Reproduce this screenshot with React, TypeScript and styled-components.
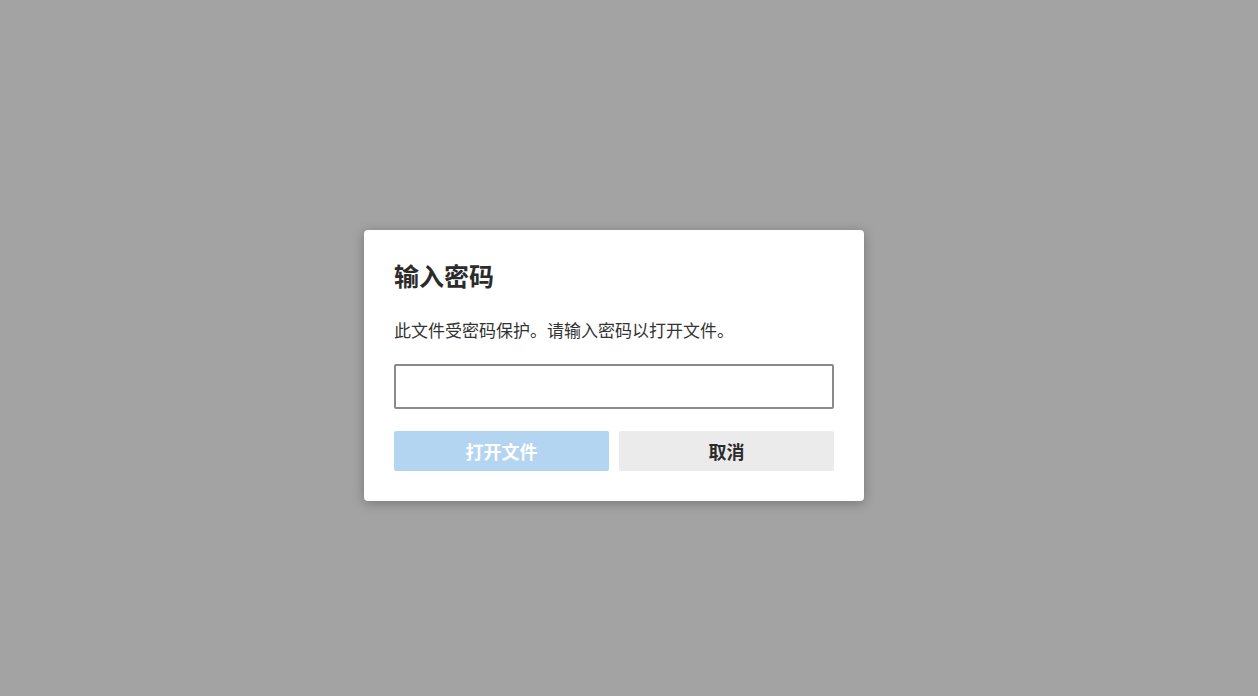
import React from "react";
import styled, { createGlobalStyle } from "styled-components";

const Global = createGlobalStyle`
  html, body { margin: 0; padding: 0; }
  body {
    background: #a3a3a3;
    font-family: "Noto Sans CJK SC", "Noto Sans", sans-serif;
  }
`;

const Backdrop = styled.div`
  width: 100vw;
  height: 100vh;
  box-sizing: border-box;
  background: #a3a3a3;
  display: flex;
  align-items: center;
  justify-content: center;
  padding: 35px 30px 0 0;
`;

const Dialog = styled.div`
  width: 500px;
  box-sizing: border-box;
  padding: 30px;
  background: #ffffff;
  border-radius: 4px;
  box-shadow: 0 2px 12px rgba(0, 0, 0, 0.28);
  display: flex;
  flex-direction: column;
`;

const Title = styled.h2`
  margin: 0;
  font-size: 25px;
  line-height: 30px;
  font-weight: 700;
  color: #2b2b2b;
`;

const Message = styled.p`
  margin: 28px 0 0;
  font-size: 17px;
  line-height: 24px;
  color: #333333;
`;

const PasswordInput = styled.input`
  margin-top: 22px;
  height: 45px;
  box-sizing: border-box;
  border: 2px solid #8a8a8a;
  border-radius: 2px;
  padding: 0 10px;
  font-size: 17px;
  outline: none;
  background: #fff;
`;

const Actions = styled.div`
  margin-top: 22px;
  display: grid;
  grid-template-columns: 1fr 1fr;
  gap: 10px;
`;

const Button = styled.button<{ $primary?: boolean }>`
  height: 40px;
  border: none;
  border-radius: 2px;
  font-family: inherit;
  font-size: 18px;
  font-weight: 700;
  cursor: pointer;
  background: ${(p) => (p.$primary ? "#b4d5f1" : "#ebebeb")};
  color: ${(p) => (p.$primary ? "#ffffff" : "#2b2b2b")};
`;

export default function App() {
  return (
    <>
      <Global />
      <Backdrop>
        <Dialog>
          <Title>输入密码</Title>
          <Message>此文件受密码保护。请输入密码以打开文件。</Message>
          <PasswordInput type="password" />
          <Actions>
            <Button $primary>打开文件</Button>
            <Button>取消</Button>
          </Actions>
        </Dialog>
      </Backdrop>
    </>
  );
}
